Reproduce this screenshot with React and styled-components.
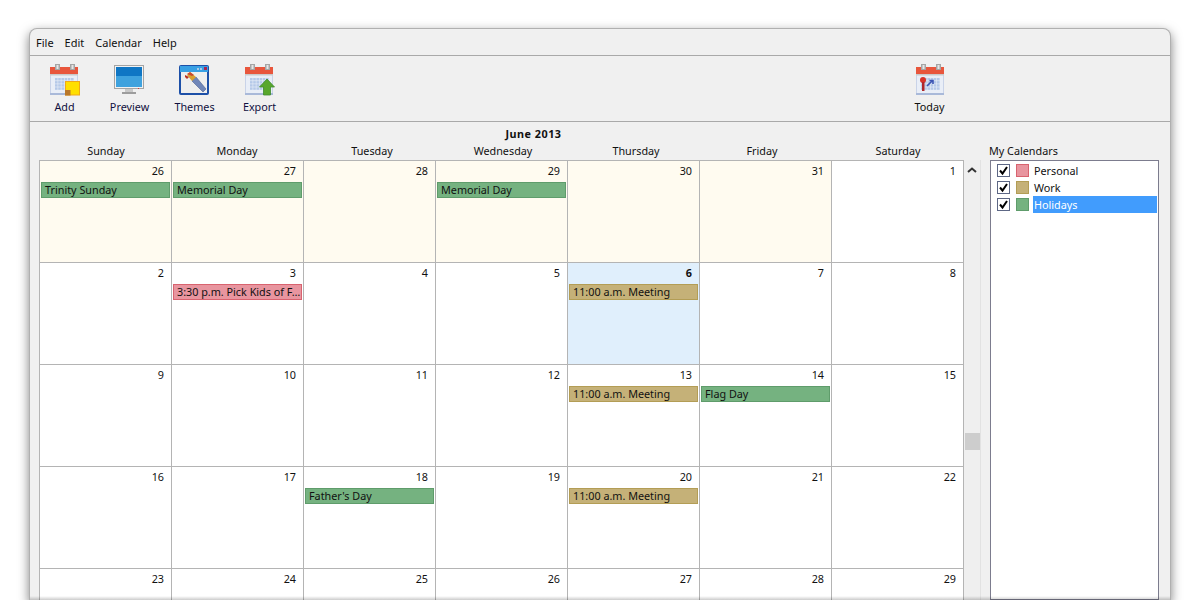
import React from "react";
import styled, { createGlobalStyle } from "styled-components";

const GlobalStyle = createGlobalStyle`
  html, body {
    margin: 0;
    padding: 0;
    background: #fff;
  }
`;

const Page = styled.div`
  height: 600px;
  padding: 29px 30px 0;
  box-sizing: border-box;
  overflow: hidden;
  font-family: "Noto Sans", "DejaVu Sans", sans-serif;
  font-size: 10.8px;
  color: #111;
`;

const Window = styled.div`
  height: 571px;
  display: flex;
  flex-direction: column;
  position: relative;
  background: #f0f0f0;
  border-radius: 7px 7px 0 0;
  box-shadow: 0 0 0 1px #b0b0b0, 0 4px 11px 1px rgba(0, 0, 0, 0.5);

  &::after {
    content: "";
    position: absolute;
    left: 0;
    right: 0;
    bottom: 0;
    height: 4px;
    background: linear-gradient(rgba(0, 0, 0, 0), rgba(0, 0, 0, 0.2));
  }
`;

const MenuBar = styled.nav`
  flex: none;
  height: 27px;
  display: flex;
  align-items: center;
  gap: 11px;
  padding: 0 6px;
  box-sizing: border-box;
  border-bottom: 1px solid #a9a9a9;
  font-size: 11px;
`;

const Toolbar = styled.div`
  flex: none;
  height: 66px;
  display: flex;
  padding-left: 2px;
  box-sizing: border-box;
  border-bottom: 1px solid #a9a9a9;
`;

const ToolItem = styled.div`
  width: 65px;
  display: flex;
  flex-direction: column;
  align-items: center;
  padding-top: 7px;
  margin-left: ${(p) => (p.$push ? "auto" : "0")};
  margin-right: ${(p) => (p.$push ? "208px" : "0")};

  svg {
    margin-left: ${(p) => (p.$push ? "0" : "-2px")};
  }
`;

const ToolLabel = styled.span`
  margin-top: 3px;
  line-height: 15px;
  color: ${(p) => p.$color || "#111"};
`;

const Body = styled.div`
  flex: 1;
  display: flex;
  min-height: 0;
  padding-left: 9px;
`;

const CalendarColumn = styled.section`
  width: 925px;
  flex: none;
  display: flex;
  flex-direction: column;
`;

const MonthTitle = styled.div`
  flex: none;
  height: 22px;
  padding: 4px 0 0 64px;
  box-sizing: border-box;
  text-align: center;
  font-weight: 700;
  letter-spacing: 0.5px;
  line-height: 16px;
`;

const WeekHeader = styled.div`
  flex: none;
  height: 16px;
  display: grid;
  grid-template-columns: repeat(7, 132px);
`;

const WeekDay = styled.div`
  text-align: center;
  line-height: 14px;
  transform: translateX(${(p) => p.$shift || 0}px);
`;

const Grid = styled.div`
  flex: 1;
  min-height: 0;
  display: grid;
  grid-template-columns: repeat(7, 132px);
  grid-auto-rows: 102px;
  border-left: 1px solid #b4b4b4;
  border-top: 1px solid #b4b4b4;
  overflow: hidden;
`;

const cellColors = { past: "#fffbf0", today: "#e0effc", plain: "#fff" };

const Cell = styled.div`
  box-sizing: border-box;
  border-right: 1px solid #b4b4b4;
  border-bottom: 1px solid #b4b4b4;
  background: ${(p) => cellColors[p.$kind]};
  padding-left: 1px;
`;

const DayNumber = styled.div`
  height: 21px;
  padding-right: 7px;
  text-align: right;
  line-height: 20px;
  font-weight: ${(p) => (p.$bold ? 700 : 400)};
`;

const eventColors = {
  holiday: ["#75b280", "#5f9c6b"],
  work: ["#c5b178", "#b39d55"],
  personal: ["#e8959f", "#d8636f"],
};

const Event = styled.div`
  width: 129px;
  height: 16px;
  box-sizing: border-box;
  padding-left: 3px;
  border: 1px solid ${(p) => eventColors[p.$type][1]};
  background: ${(p) => eventColors[p.$type][0]};
  line-height: 14px;
  white-space: nowrap;
  overflow: hidden;
`;

const ScrollBar = styled.div`
  width: 17px;
  flex: none;
  position: relative;
  background: #efefef;
  margin-top: 38px;
  border-right: 1px solid #e2e2e2;
  display: flex;
  justify-content: center;
  padding-top: 7px;
  box-sizing: border-box;
`;

const ScrollThumb = styled.div`
  position: absolute;
  top: 273px;
  left: 1px;
  width: 15px;
  height: 17px;
  background: #cdcdcd;
`;

const Sidebar = styled.aside`
  width: 169px;
  flex: none;
  margin-left: 9px;
  display: flex;
  flex-direction: column;
`;

const SidebarTitle = styled.div`
  flex: none;
  height: 38px;
  padding-top: 21px;
  box-sizing: border-box;
  line-height: 16px;
  text-indent: -1px;
`;

const CalendarList = styled.div`
  flex: 1;
  padding-top: 1px;
  background: #fff;
  border: 1px solid #7c7c8e;
`;

const CalendarRow = styled.div`
  height: 17px;
  display: flex;
  align-items: center;
  padding-left: 6px;
`;

const Check = styled.span`
  width: 11px;
  height: 11px;
  flex: none;
  display: flex;
  align-items: center;
  justify-content: center;
  background: #fff;
  border: 1px solid #5d6785;
`;

const Swatch = styled.span`
  width: 11px;
  height: 11px;
  flex: none;
  margin-left: 6px;
  border: 1px solid ${(p) => eventColors[p.$type][1]};
  background: ${(p) => eventColors[p.$type][0]};
`;

const RowLabel = styled.span`
  flex: 1;
  height: 17px;
  margin: 0 1px 0 4px;
  padding-left: 1px;
  line-height: 17px;
  background: ${(p) => (p.$selected ? "#419cfd" : "transparent")};
  color: ${(p) => (p.$selected ? "#fff" : "#111")};
`;

// shared calendar page used by Add, Export and Today
function CalendarBase() {
  const squares = [];
  for (let r = 0; r < 4; r++) {
    for (let c = 0; c < 6; c++) {
      squares.push(<rect key={`${r}-${c}`} x={7 + c * 3.2} y={15 + r * 3.1} width="2.6" height="2.5" fill="#b5c9e8" />);
    }
  }
  return (
    <>
      <rect x="2" y="4" width="28" height="28" fill="#a9b9d9" />
      <rect x="2.5" y="11" width="27" height="19" fill="#e9eef7" />
      <rect x="2" y="4" width="28" height="8" fill="#e8563c" />
      <rect x="2" y="11" width="28" height="1.5" fill="#c9c9c9" />
      <rect x="7" y="1" width="5" height="6" fill="#a5a5a5" />
      <rect x="8.5" y="2" width="2" height="4" fill="#e6e6e6" />
      <rect x="22" y="1" width="5" height="6" fill="#a5a5a5" />
      <rect x="23.5" y="2" width="2" height="4" fill="#e6e6e6" />
      {squares}
    </>
  );
}

function AddIcon() {
  return (
    <svg width="32" height="33" viewBox="0 0 32 33">
      <CalendarBase />
      <rect x="17.5" y="18.5" width="14" height="13.5" fill="#ffdf00" stroke="#f0a818" />
      <rect x="17" y="27" width="5.5" height="5.5" fill="#b9772a" />
    </svg>
  );
}

function PreviewIcon() {
  return (
    <svg width="32" height="33" viewBox="0 0 32 33">
      <rect x="1.5" y="2.5" width="29" height="23" fill="#f2f2f2" stroke="#a4a4a4" />
      <rect x="3" y="4" width="26" height="9" fill="#0f76c4" />
      <rect x="3" y="13" width="26" height="11" fill="#3fa2de" />
      <rect x="12" y="26" width="8" height="3" fill="#c9c9c9" />
      <rect x="9" y="29" width="14" height="2" fill="#9d9d9d" />
      <rect x="25" y="25" width="1" height="1" fill="#d8343c" />
    </svg>
  );
}

function ThemesIcon() {
  return (
    <svg width="32" height="33" viewBox="0 0 32 33">
      <rect x="1" y="2" width="30" height="30" rx="2" fill="#1d50a8" />
      <rect x="2" y="3" width="28" height="6" fill="#38a0e4" />
      <rect x="19" y="5" width="2" height="2" fill="#a9c9e8" />
      <rect x="22" y="5" width="2" height="2" fill="#a9c9e8" />
      <rect x="26" y="4" width="3" height="3" fill="#a82450" />
      <rect x="3" y="9" width="26" height="21" fill="#eeeeee" />
      <path d="M14 18 L18 14 L28 26 L25 29 Z" fill="#7086b8" stroke="#4a5f92" strokeWidth="0.6" />
      <path d="M9 12 L14 18 L18 14 L12 9 Z" fill="#d8a030" />
      <path d="M7 12 L11 14 L9 16 L7 14 Z" fill="#b83020" />
      <path d="M9 11 L14 13 L16 12 L12 9 Z" fill="#c84830" />
    </svg>
  );
}

function ExportIcon() {
  return (
    <svg width="32" height="33" viewBox="0 0 32 33">
      <CalendarBase />
      <path d="M24 16 L31.5 24 L27.5 24 L27.5 32 L20.5 32 L20.5 24 L16.5 24 Z" fill="#58a72c" stroke="#3f8a2e" strokeWidth="0.8" />
    </svg>
  );
}

function TodayIcon() {
  return (
    <svg width="32" height="33" viewBox="0 0 32 33">
      <CalendarBase />
      <circle cx="9" cy="17" r="3" fill="#d8332a" />
      <rect x="8" y="19" width="2.5" height="9" fill="#b0262a" />
      <path d="M13 23 L18 18 M15.5 17.5 L19 17.5 L19 21" stroke="#3c55b4" strokeWidth="1.6" fill="none" />
    </svg>
  );
}

function CheckMark() {
  return (
    <svg width="11" height="11" viewBox="0 0 11 11">
      <path d="M2 5.5 L4.5 8.5 L9 2" stroke="#000" strokeWidth="2" fill="none" />
    </svg>
  );
}

const weekDays = [
  ["Sunday", 1],
  ["Monday", 0],
  ["Tuesday", 3],
  ["Wednesday", 2],
  ["Thursday", 3],
  ["Friday", -3],
  ["Saturday", 1],
];

const days = [
  { n: 26, kind: "past", event: ["holiday", "Trinity Sunday"] },
  { n: 27, kind: "past", event: ["holiday", "Memorial Day"] },
  { n: 28, kind: "past" },
  { n: 29, kind: "past", event: ["holiday", "Memorial Day"] },
  { n: 30, kind: "past" },
  { n: 31, kind: "past" },
  { n: 1 },
  { n: 2 },
  { n: 3, event: ["personal", "3:30 p.m. Pick Kids of F…"] },
  { n: 4 },
  { n: 5 },
  { n: 6, kind: "today", bold: true, event: ["work", "11:00 a.m. Meeting"] },
  { n: 7 },
  { n: 8 },
  { n: 9 },
  { n: 10 },
  { n: 11 },
  { n: 12 },
  { n: 13, event: ["work", "11:00 a.m. Meeting"] },
  { n: 14, event: ["holiday", "Flag Day"] },
  { n: 15 },
  { n: 16 },
  { n: 17 },
  { n: 18, event: ["holiday", "Father's Day"] },
  { n: 19 },
  { n: 20, event: ["work", "11:00 a.m. Meeting"] },
  { n: 21 },
  { n: 22 },
  { n: 23 },
  { n: 24 },
  { n: 25 },
  { n: 26 },
  { n: 27 },
  { n: 28 },
  { n: 29 },
];

const calendars = [
  { name: "Personal", type: "personal" },
  { name: "Work", type: "work" },
  { name: "Holidays", type: "holiday", selected: true },
];

export default function App() {
  return (
    <Page>
      <GlobalStyle />
      <Window>
        <MenuBar>
          <span>File</span>
          <span>Edit</span>
          <span>Calendar</span>
          <span>Help</span>
        </MenuBar>
        <Toolbar>
          <ToolItem><AddIcon /><ToolLabel $color="#101040">Add</ToolLabel></ToolItem>
          <ToolItem><PreviewIcon /><ToolLabel $color="#101040">Preview</ToolLabel></ToolItem>
          <ToolItem><ThemesIcon /><ToolLabel $color="#101040">Themes</ToolLabel></ToolItem>
          <ToolItem><ExportIcon /><ToolLabel $color="#101040">Export</ToolLabel></ToolItem>
          <ToolItem $push><TodayIcon /><ToolLabel>Today</ToolLabel></ToolItem>
        </Toolbar>
        <Body>
          <CalendarColumn>
            <MonthTitle>June 2013</MonthTitle>
            <WeekHeader>
              {weekDays.map(([name, shift]) => (
                <WeekDay key={name} $shift={shift}>{name}</WeekDay>
              ))}
            </WeekHeader>
            <Grid>
              {days.map((d, i) => (
                <Cell key={i} $kind={d.kind || "plain"}>
                  <DayNumber $bold={d.bold}>{d.n}</DayNumber>
                  {d.event && <Event $type={d.event[0]}>{d.event[1]}</Event>}
                </Cell>
              ))}
            </Grid>
          </CalendarColumn>
          <ScrollBar>
            <svg width="10" height="7" viewBox="0 0 10 7">
              <path d="M1 5 L5 1.5 L9 5" stroke="#333" strokeWidth="2" fill="none" />
            </svg>
            <ScrollThumb />
          </ScrollBar>
          <Sidebar>
            <SidebarTitle>My Calendars</SidebarTitle>
            <CalendarList>
              {calendars.map((c) => (
                <CalendarRow key={c.name}>
                  <Check><CheckMark /></Check>
                  <Swatch $type={c.type} />
                  <RowLabel $selected={c.selected}>{c.name}</RowLabel>
                </CalendarRow>
              ))}
            </CalendarList>
          </Sidebar>
        </Body>
      </Window>
    </Page>
  );
}
